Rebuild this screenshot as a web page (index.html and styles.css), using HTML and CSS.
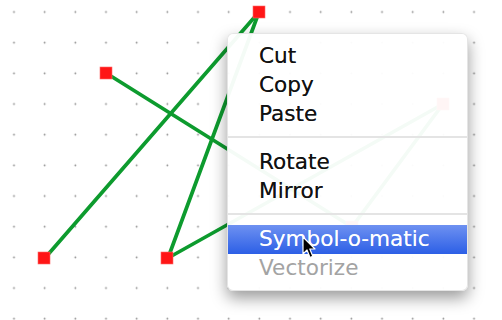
FILE: index.html
```html
<!DOCTYPE html>
<html lang="en">
<head>
    <meta charset="UTF-8">
    <meta name="viewport" content="width=device-width, initial-scale=1.0">
    <title>Schematic Editor</title>
    <link rel="stylesheet" href="styles.css">
</head>
<body>
    <div class="canvas">
        <svg class="sheet" width="502" height="320" viewBox="0 0 502 320">
            <defs>
                <pattern id="grid" x="-1.33" y="-3.33" width="30.67" height="30.67" patternUnits="userSpaceOnUse">
                    <circle cx="15.33" cy="15.33" r="0.9" fill="#8a8a8a"/>
                </pattern>
            </defs>
            <rect width="502" height="320" fill="url(#grid)"/>

            <!-- wires -->
            <g class="wire">
                <line x1="259" y1="12" x2="45" y2="258"/>
                <line x1="259" y1="12" x2="168" y2="258"/>
                <line x1="106" y1="73" x2="352" y2="227"/>
                <line x1="168" y1="258" x2="443" y2="104"/>
                <line x1="443" y1="104" x2="352" y2="227"/>
            </g>

            <!-- pins -->
            <g class="pin">
                <rect x="253" y="6" width="12" height="12"/>
                <rect x="100" y="67" width="12" height="12"/>
                <rect x="38" y="252" width="12" height="12"/>
                <rect x="161" y="252" width="12" height="12"/>
                <rect x="437" y="98" width="12" height="12"/>
                <rect x="346" y="221" width="12" height="12"/>
            </g>
        </svg>

        <ul class="menu">
            <li class="item">Cut</li>
            <li class="item">Copy</li>
            <li class="item">Paste</li>
            <li class="sep"></li>
            <li class="item">Rotate</li>
            <li class="item">Mirror</li>
            <li class="sep"></li>
            <li class="item active">Symbol-o-matic</li>
            <li class="item disabled">Vectorize</li>
        </ul>

        <svg class="cursor" width="14" height="23" viewBox="0 0 14 23">
            <path d="M1 1 L1 18 L5 14 L8 21.5 L10.8 20.3 L7.8 13 L13 13 Z" fill="#000" stroke="#fff" stroke-width="1.2" stroke-linejoin="round"/>
        </svg>
    </div>
</body>
</html>
```

FILE: styles.css
```css
body {
    margin: 0;
    background-color: #fff;
    font-family: "Lucida Grande", "DejaVu Sans", sans-serif;
}
.canvas {
    position: relative;
    width: 502px;
    height: 320px;
    overflow: hidden;
}
.sheet {
    display: block;
}
.wire line {
    stroke: #0d9b2e;
    stroke-width: 3.7;
    stroke-linecap: round;
}
.pin rect {
    fill: #ff1616;
    stroke: #ff6a6a;
    stroke-width: 0.6;
}
.menu {
    position: absolute;
    left: 227px;
    top: 33px;
    width: 241px;
    box-sizing: border-box;
    margin: 0;
    padding: 8px 0 7px;
    list-style: none;
    background: rgba(255, 255, 255, 0.955);
    border: 1px solid rgba(0, 0, 0, 0.1);
    border-radius: 6px;
    box-shadow: 0 7px 16px rgba(0, 0, 0, 0.4);
}
.item {
    height: 29px;
    line-height: 28px;
    padding-left: 31px;
    font-size: 21.6px;
    color: #111;
    text-shadow: 0 0 0.4px rgba(0, 0, 0, 0.6);
}
.item.active {
    color: #fff;
    background: linear-gradient(#6e91f1, #2c5fe6);
    text-shadow: 0 0 0.4px rgba(255, 255, 255, 0.6);
}
.item.disabled {
    color: #a3a3a3;
    text-shadow: none;
}
.sep {
    height: 2px;
    margin: 7px 0 10px;
    background-color: #e4e4e4;
}
.cursor {
    position: absolute;
    left: 302px;
    top: 236px;
}
```
